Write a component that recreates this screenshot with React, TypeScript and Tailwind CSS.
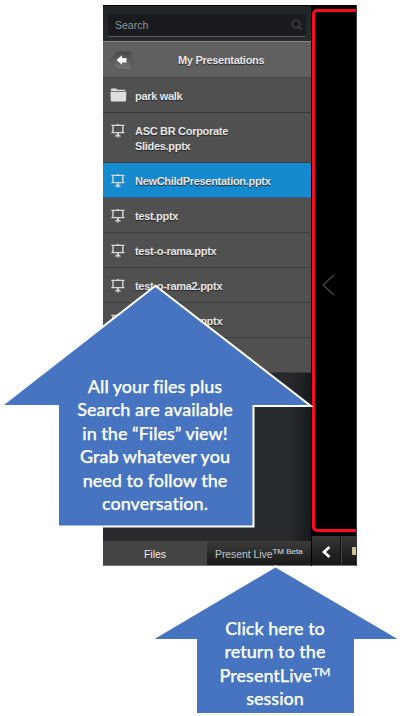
import React from "react";

const ui = "font-['Liberation_Sans',Arial,sans-serif]";
const label = "relative top-px text-[11px] font-bold tracking-[-0.3px] text-[#e7e7e7] [text-shadow:0_1px_1px_#222]";
const callout =
  "font-[Lato,'Open_Sans',sans-serif] text-[18px] font-medium text-white [-webkit-text-stroke:0.25px_white] [font-variant-ligatures:none]";

function BoardIcon() {
  return (
    <svg className="h-[15px] w-[14px] shrink-0" viewBox="0 0 14 15" fill="none" stroke="#d8d8d8">
      <path d="M.3 2.4H13.5M.3 9.6H13.5" strokeWidth="1.4" />
      <path d="M2 2V10M11.8 2V10" strokeWidth="1.4" />
      <path d="M6.9 1V2M6.9 10V14.6" strokeWidth="1.6" />
      <path d="M4.3 13.4L6.9 11.4L9.5 13.4" strokeWidth="1.2" />
    </svg>
  );
}

function FolderIcon() {
  return (
    <svg className="h-[14px] w-[17px] shrink-0" viewBox="0 0 17 14" fill="#dedede">
      <path d="M1 3V1.2Q1 .4 1.8 .4H6L7.4 1.8H14.5Q15.3 1.8 15.3 2.6V3Z" />
      <path d="M.4 3.8H16.4L16 12.8Q16 13.5 15.2 13.5H1.6Q.8 13.5 .8 12.8Z" />
    </svg>
  );
}

function FileRow({ name, height, active }: { name: string; height: string; active?: boolean }) {
  return (
    <div
      className={`flex shrink-0 items-start border-b pl-[8px] pt-[10px] ${height} ${
        active ? "border-[#2a6084] bg-[#168ace]" : "border-[#3b4143] bg-[#505050]"
      }`}
    >
      <BoardIcon />
      <span className={`ml-[10px] w-[145px] leading-[15px] ${label}`}>{name}</span>
    </div>
  );
}

export default function App() {
  return (
    <main className={`relative h-[716px] w-[400px] overflow-hidden bg-white pl-[103px] pt-[5px] ${ui}`}>
      <section className="flex h-[561px] w-[254px] overflow-hidden bg-black">
        <div className="flex w-[208px] shrink-0 flex-col bg-gradient-to-r from-[#272b2d] from-90% to-[#15191b]">
          <div className="flex h-[36px] shrink-0 items-center border-t border-black bg-gradient-to-b from-[#202528] to-[#272b2e] px-[5px]">
            <div className="mt-[3px] flex h-[23px] w-[198px] items-center justify-between rounded-[2px] border-b border-[#5a5d5f] bg-[#191b1e] pl-[7px] pr-[3px]">
              <span className="relative top-px text-[10.5px] text-[#929496]">Search</span>
              <svg className="h-[12px] w-[12px]" viewBox="0 0 12 12" fill="none" stroke="#3c3f42" strokeWidth="1.6">
                <circle cx="5" cy="5" r="3.8" /><path d="M7.8 7.8L11 11" />
              </svg>
            </div>
          </div>
          <div className="flex h-[37px] shrink-0 items-center border-b border-t border-b-[#444848] border-t-[#858787] bg-[#606060] pl-[7px]">
            <svg className="mt-px h-[19px] w-[22px]" viewBox="0 0 22 19">
              <defs><linearGradient id="back" x2="0" y2="1"><stop stopColor="#484848" /><stop offset="1" stopColor="#747474" /></linearGradient></defs>
              <path d="M7 .5H19.5Q21.5 .5 21.5 2.5V16.5Q21.5 18.5 19.5 18.5H7L.5 9.5Z" fill="url(#back)" stroke="#555" />
              <path d="M6.5 9L12 4.3V7H16.5V11.5H12V13.7Z" fill="white" />
            </svg>
            <span className={`ml-[46px] ${label}`}>My Presentations</span>
          </div>
          <div className="flex h-[35px] shrink-0 items-center border-b border-[#363c3e] bg-[#505050] pl-[7px]">
            <FolderIcon />
            <span className={`ml-[8px] ${label}`}>park walk</span>
          </div>
          <FileRow name="ASC BR Corporate Slides.pptx" height="h-[50px]" />
          <FileRow name="NewChildPresentation.pptx" height="h-[35px]" active />
          <FileRow name="test.pptx" height="h-[35px]" />
          <FileRow name="test-o-rama.pptx" height="h-[35px]" />
          <FileRow name="test-o-rama2.pptx" height="h-[35px]" />
          <FileRow name="test-o-rama3.pptx" height="h-[35px]" />
          <div className="h-[35px] shrink-0 border-b border-[#363c3e] bg-[#505050]" />
          <div className="flex-1" />
          <div className="flex h-[25px] shrink-0 border-b border-[#777] text-[10.5px] text-[#eee]">
            <div className="flex w-[104px] items-center justify-center bg-[#444]"><span className="mt-[3px]">Files</span></div>
            <div className="flex flex-1 items-center bg-gradient-to-b from-[#3c3c3c] to-[#191919] pl-[8px] text-[#c4c4c4]">
              <span className="mt-[4px] whitespace-nowrap tracking-[-0.08px]">Present Live</span>
              <span className="mb-[3px] whitespace-nowrap text-[8px] [-webkit-text-stroke:0.2px_#c4c4c4]">TM Beta</span>
            </div>
          </div>
        </div>
        <div className="flex w-[46px] shrink-0 flex-col overflow-hidden border-r border-[#383838] bg-black pl-px pt-[4px]">
          <div className="flex h-[523px] w-[70px] items-center rounded-[5px] border-[3px] border-[#fd0b1c] pl-[7px] pt-[29px]">
            <svg className="h-[22px] w-[13px]" viewBox="0 0 13 22" fill="none" stroke="#454545" strokeWidth="1.4"><path d="M12 1L1 11L12 21" /></svg>
          </div>
          <div className="mt-[4px] flex flex-1 border-b border-[#777] bg-gradient-to-b from-[#373737] to-[#151515]">
            <div className="flex w-[29px] shrink-0 items-center justify-center border-r border-[#111]">
              <svg className="mt-[2px] h-[12px] w-[9px]" viewBox="0 0 9 12" fill="none" stroke="white" strokeWidth="2.7"><path d="M7.5 1L2 6L7.5 11" /></svg>
            </div>
            <div className="flex flex-1 items-center border-l border-[#444] pl-[10px]"><div className="h-[8px] w-[5px] rounded-l-[1px] bg-[#cfc298]" /></div>
          </div>
        </div>
      </section>
      <div className={`absolute left-0 top-[280px] h-[250px] w-[320px] ${callout}`}>
        <svg className="absolute h-[250px] w-[320px]" viewBox="0 0 320 250">
          <path d="M155.5 7L4 125H59V245.5H252.5V125H308Z" fill="#4674c1" stroke="white" strokeWidth="4" strokeMiterlimit="10" paintOrder="stroke" />
        </svg>
        <div className="relative flex flex-col items-center whitespace-nowrap pr-[10px] pt-[95px] leading-[23.4px]">
          <span>All your files plus</span>
          <span>Search are available</span>
          <span>in the “Files” view!</span>
          <span>Grab whatever you</span>
          <span>need to follow the</span>
          <span>conversation.</span>
        </div>
      </div>
      <div className={`absolute left-[150px] top-[564px] h-[152px] w-[250px] ${callout}`}>
        <svg className="absolute h-[152px] w-[250px]" viewBox="0 0 250 152">
          <path d="M125.5 3.5L4.5 75H47V149H204V75H247.5Z" fill="#4674c1" stroke="white" strokeWidth="4" strokeMiterlimit="10" paintOrder="stroke" />
        </svg>
        <div className="relative flex flex-col items-center whitespace-nowrap pt-[53px] leading-[23.4px]">
          <span>Click here to</span>
          <span>return to the</span>
          <span className="flex">PresentLive<span className="-mt-[4px] text-[12px]">TM</span></span>
          <span>session</span>
        </div>
      </div>
    </main>
  );
}
